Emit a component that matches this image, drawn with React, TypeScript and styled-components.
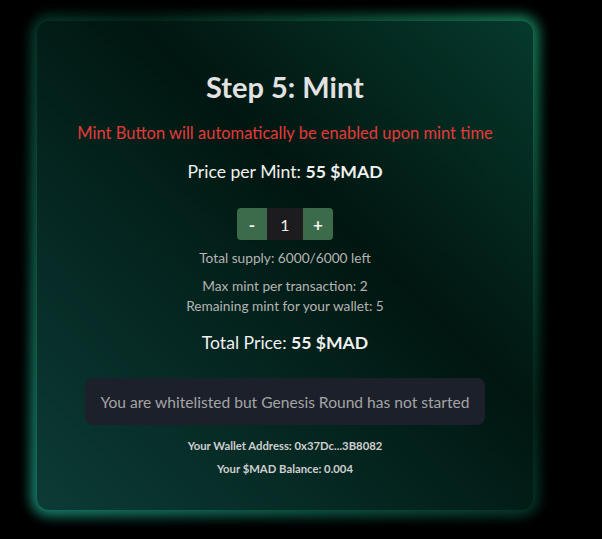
import React, { useState } from "react";
import styled, { createGlobalStyle } from "styled-components";

const Global = createGlobalStyle`
  html, body { margin: 0; padding: 0; background: #000; }
  body { font-family: Lato, "Open Sans", sans-serif; }
  * { box-sizing: border-box; }
`;

const Page = styled.div`
  width: 602px;
  height: 539px;
  background: #000;
  padding: 21px 0 0 37px;
  overflow: hidden;
`;

const Layer = styled.div`
  position: relative;
  isolation: isolate;
`;

const Card = styled.div`
  position: relative;
  width: 496px;
  height: 489px;
  border-radius: 12px;
  background: linear-gradient(to top right, #0c3b36 0%, #03201a 45%, #011610 60%, #06392c 100%);
  padding-top: 48px;
  display: flex;
  flex-direction: column;
  align-items: center;
  box-shadow: 0 0 16px 3px rgba(10, 80, 60, 0.45);
  &::before {
    content: "";
    position: absolute;
    inset: -4px;
    border-radius: 15px;
    background: linear-gradient(to top right, #22ad95 0%, #0d5444 38%, #021a12 60%, #20a674 100%);
    filter: blur(7px);
    z-index: -1;
  }
`;

const Title = styled.h1`
  margin: 0;
  font-size: 29px;
  line-height: 36px;
  font-weight: 700;
  color: #e2e2e2;
`;

const Notice = styled.p`
  margin: 18px 0 0;
  font-size: 16.5px;
  line-height: 20px;
  color: #e53a3a;
`;

const PriceLine = styled.p<{ $top: number }>`
  margin: ${(p) => p.$top}px 0 0;
  font-size: 17.6px;
  line-height: 22px;
  color: #f0f0f0;
  b { font-weight: 700; }
`;

const Stepper = styled.div`
  margin-top: 25px;
  display: flex;
  height: 32px;
  border-radius: 4px;
  overflow: hidden;
`;

const StepButton = styled.button`
  width: 30px;
  border: 0;
  background: #3c6b4b;
  color: #f2f2f2;
  font-family: inherit;
  font-weight: 700;
  font-size: 17px;
  padding: 0;
  cursor: pointer;
`;

const Count = styled.div`
  width: 36px;
  background: #1c1c1e;
  color: #f0f0f0;
  font-size: 16px;
  display: flex;
  align-items: center;
  justify-content: center;
`;

const Info = styled.p<{ $top: number }>`
  margin: ${(p) => p.$top}px 0 0;
  font-size: 13.7px;
  line-height: 20px;
  color: #b4b4b4;
`;

const Alert = styled.div`
  margin-top: 24px;
  width: 400px;
  height: 47px;
  border-radius: 8px;
  background: #1c202b;
  color: #a4a4a4;
  font-size: 15.6px;
  display: flex;
  align-items: center;
  justify-content: center;
`;

const Small = styled.p<{ $top: number }>`
  margin: ${(p) => p.$top}px 0 0;
  font-size: 11.3px;
  line-height: 16px;
  font-weight: 700;
  color: #cfcfcf;
`;

export default function App() {
  const [count, setCount] = useState(1);
  return (
    <>
      <Global />
      <Page>
        <Layer>
          <Card>
            <Title>Step 5: Mint</Title>
            <Notice>Mint Button will automatically be enabled upon mint time</Notice>
            <PriceLine $top={18}>
              Price per Mint: <b>55 $MAD</b>
            </PriceLine>
            <Stepper>
              <StepButton onClick={() => setCount((c) => Math.max(1, c - 1))}>-</StepButton>
              <Count>{count}</Count>
              <StepButton onClick={() => setCount((c) => Math.min(2, c + 1))}>+</StepButton>
            </Stepper>
            <Info $top={8}>Total supply: 6000/6000 left</Info>
            <Info $top={8}>Max mint per transaction: 2</Info>
            <Info $top={0}>Remaining mint for your wallet: 5</Info>
            <PriceLine $top={16}>
              Total Price: <b>{55 * count} $MAD</b>
            </PriceLine>
            <Alert>You are whitelisted but Genesis Round has not started</Alert>
            <Small $top={13}>Your Wallet Address: 0x37Dc...3B8082</Small>
            <Small $top={7}>Your $MAD Balance: 0.004</Small>
          </Card>
        </Layer>
      </Page>
    </>
  );
}
